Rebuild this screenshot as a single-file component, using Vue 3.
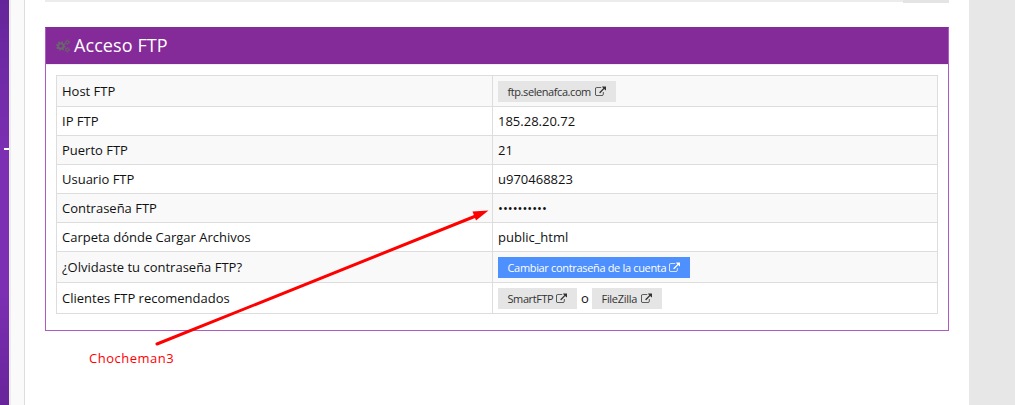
<script setup>
const linkPath = 'M1408 928v320q0 119-84.5 203.5t-203.5 84.5h-832q-119 0-203.5-84.5t-84.5-203.5v-832q0-119 84.5-203.5t203.5-84.5h704q14 0 23 9t9 23v64q0 14-9 23t-23 9h-704q-66 0-113 47t-47 113v832q0 66 47 113t113 47h832q66 0 113-47t47-113v-320q0-14 9-23t23-9h64q14 0 23 9t9 23zm384-864v512q0 26-19 45t-45 19-45-19l-176-176-652 652q-10 10-23 10t-23-10l-114-114q-10-10-10-23t10-23l652-652-176-176q-19-19-19-45t19-45 45-19h512q26 0 45 19t19 45z'
const rows = [
  { label: 'Host FTP', links: [{ text: 'ftp.selenafca.com', cls: 'host' }] },
  { label: 'IP FTP', value: '185.28.20.72' },
  { label: 'Puerto FTP', value: '21' },
  { label: 'Usuario FTP', value: 'u970468823' },
  { label: 'Contraseña FTP', value: '••••••••••', cls: 'dots' },
  { label: 'Carpeta dónde Cargar Archivos', value: 'public_html' },
  { label: '¿Olvidaste tu contraseña FTP?', links: [{ text: 'Cambiar contraseña de la cuenta', cls: 'primary' }] },
  { label: 'Clientes FTP recomendados', links: [{ text: 'SmartFTP', cls: 'smart' }, { text: 'FileZilla', cls: 'zilla' }] },
]
</script>

<template>
  <div class="page">
    <aside class="sidebar"><i class="tick"></i></aside>
    <div class="edge"></div>
    <div class="gutter"></div>
    <main class="content">
      <div class="topbar"><span class="topbar-end"></span></div>
      <section class="panel">
        <header class="head">
          <svg class="cogs" width="14" height="14" viewBox="0 0 14 14" fill="none">
            <circle cx="4.8" cy="7" r="2.7" stroke-width="1.8" />
            <circle cx="4.8" cy="7" r="4" stroke-width="1.5" stroke-dasharray="1.57 1.57" />
            <circle cx="11.3" cy="3.2" r="1.4" stroke-width="1" />
            <circle cx="11.3" cy="3.2" r="2.2" stroke-width="1" stroke-dasharray="1.15 1.15" />
            <circle cx="11.3" cy="10.8" r="1.4" stroke-width="1" />
            <circle cx="11.3" cy="10.8" r="2.2" stroke-width="1" stroke-dasharray="1.15 1.15" />
          </svg>
          <h1>Acceso FTP</h1>
        </header>
        <div class="table">
          <div v-for="row in rows" :key="row.label" class="row" :class="{ tall: row.links }">
            <div class="cell label"><span>{{ row.label }}</span></div>
            <div class="cell value">
              <span v-if="row.value" :class="row.cls">{{ row.value }}</span>
              <template v-for="(link, i) in row.links" :key="link.text">
                <span v-if="i" class="or">o</span>
                <a class="btn" :class="link.cls"><span>{{ link.text }}</span><svg width="11" height="11" viewBox="0 0 1792 1664"><path :d="linkPath" /></svg></a>
              </template>
            </div>
          </div>
        </div>
      </section>
    </main>
    <div class="right"></div>
    <svg class="arrow" width="1015" height="405" viewBox="0 0 1015 405">
      <path d="M157 344L477 215.500" stroke="#f00" stroke-width="3" stroke-linecap="round" />
      <path d="M488.500 210.500L472.500 211.500L476 220.500Z" fill="#f00" />
    </svg>
    <span class="note">Chocheman3</span>
  </div>
</template>

<style>
body { margin: 0; overflow: hidden; }
</style>
<style scoped>
* { box-sizing: border-box; }
.page { position: relative; display: flex; width: 1015px; height: 405px; overflow: hidden; background: #fff; font-family: "Open Sans", sans-serif; font-size: 13px; color: #111; }
.sidebar { width: 9px; padding-top: 148px; background: linear-gradient(#65259a, #7c2fb3 38%, #7c2fb3 72%, #68249a); }
.tick { display: block; width: 5px; height: 2px; margin-left: 4px; background: #fff; }
.edge { width: 2px; background: #ececec; }
.gutter { width: 14px; background: #fafafa; border-right: 1px solid #ddd; }
.content { width: 944px; padding: 0 20px; }
.topbar { height: 27px; display: flex; justify-content: flex-end; background: linear-gradient(#ececec, #ececec) 0 0 / 100% 2px no-repeat; }
.topbar-end { width: 46px; height: 3px; background: #e4e4e4; }
.panel { width: 904px; height: 304px; border: 1px solid #ae5bc4; border-top-color: #852b99; }
.head { height: 36px; display: flex; align-items: center; padding: 0 0 2px 10px; background: #852b99; box-shadow: 0 1px #eee; color: #fff; }
.cogs { stroke: #686a68; margin-top: 2px; }
h1 { margin: 0 0 0 4px; font-size: 18px; line-height: 24px; font-weight: 400; letter-spacing: .08px; }
.table { width: 882px; margin: 11px 0 0 10px; border: 1px solid #ddd; border-bottom: 0; }
.row { display: flex; height: 29px; border-bottom: 1px solid #ddd; }
.row:nth-child(odd) { background: #f9f9f9; }
.row.tall { height: 31px; }
.cell { display: flex; align-items: center; padding-left: 5px; white-space: nowrap; }
.label { width: 435px; }
.value { flex: 1; border-left: 1px solid #ddd; }
.btn { display: flex; align-items: center; justify-content: space-between; height: 21px; padding: 0 10px 0 9.500px; background: #e5e5e5; color: #333; font-size: 11px; letter-spacing: -.42px; }
.btn svg { fill: currentColor; flex: none; }
.host { width: 118px; }
.primary { width: 192px; background: #4d90fe; color: #fff; letter-spacing: -.33px; }
.smart { width: 79px; }
.zilla { width: 70px; letter-spacing: -.3px; }
.or { width: 15px; padding-left: 4px; }
.arrow { position: absolute; left: 0; top: 0; }
.note { position: absolute; left: 89px; top: 349px; font-size: 13px; line-height: 18px; color: #f00; letter-spacing: .5px; }
.right { width: 46px; background: #e7e7e7; }
</style>
